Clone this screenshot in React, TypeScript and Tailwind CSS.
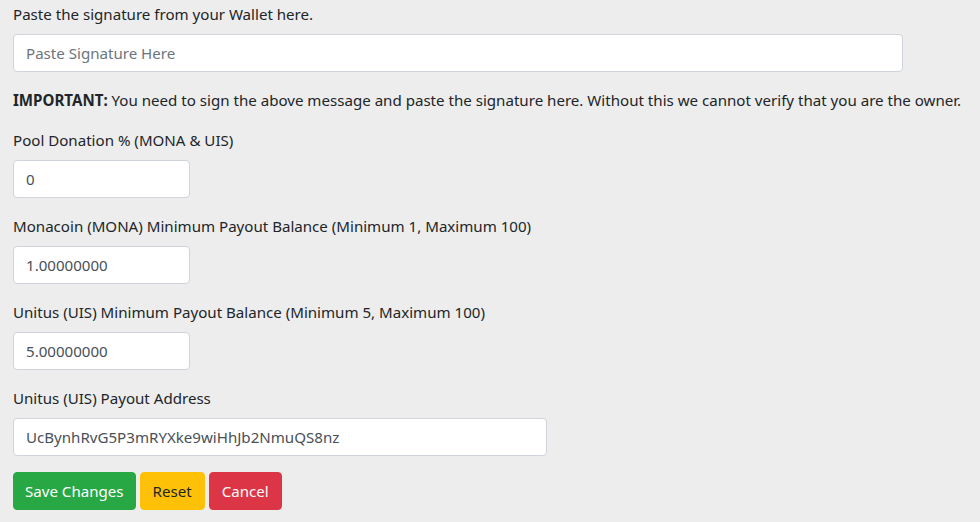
import React from "react";

const font = { fontFamily: '"Noto Sans", "Open Sans", sans-serif' };

function Field({ label, value, w, placeholder }: { label: string; value?: string; w: string; placeholder?: string }) {
  return (
    <div className="mb-4">
      <label className="block mb-2 leading-6">{label}</label>
      <input
        readOnly
        value={value ?? ""}
        placeholder={placeholder}
        className={`block h-[38px] ${w} px-3 py-1.5 rounded border border-[#ced4da] bg-white text-[#495057] placeholder:text-[#6c757d] text-[15.1px] leading-6 outline-none`}
        style={font}
      />
    </div>
  );
}

export default function App() {
  return (
    <div className="min-h-[522px] w-[980px] bg-[#ededed] text-[#212529] text-[15.1px] leading-6 pl-[13px] pt-[2px]" style={font}>
      <Field label="Paste the signature from your Wallet here." w="w-[890px]" placeholder="Paste Signature Here" />
      <p className="mb-4 whitespace-nowrap">
        <b className="font-bold">IMPORTANT:</b> You need to sign the above message and paste the signature here. Without this we cannot verify that you are the owner.
      </p>
      <Field label="Pool Donation % (MONA & UIS)" value="0" w="w-[177px]" />
      <Field label="Monacoin (MONA) Minimum Payout Balance (Minimum 1, Maximum 100)" value="1.00000000" w="w-[177px]" />
      <Field label="Unitus (UIS) Minimum Payout Balance (Minimum 5, Maximum 100)" value="5.00000000" w="w-[177px]" />
      <Field label="Unitus (UIS) Payout Address" value="UcBynhRvG5P3mRYXke9wiHhJb2NmuQS8nz" w="w-[534px]" />
      <div className="flex gap-[4px]">
        <button className="h-[38px] px-[11px] rounded bg-[#28a745] text-white border border-[#28a745]">Save Changes</button>
        <button className="h-[38px] px-3 rounded bg-[#ffc107] text-[#212529] border border-[#ffc107]">Reset</button>
        <button className="h-[38px] px-3 rounded bg-[#dc3545] text-white border border-[#dc3545]">Cancel</button>
      </div>
    </div>
  );
}
